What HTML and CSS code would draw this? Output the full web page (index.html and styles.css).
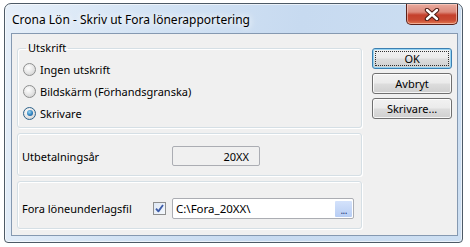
FILE: index.html
```html
<!DOCTYPE html>
<html lang="sv">
<head>
<meta charset="utf-8">
<title>Crona Lön - Skriv ut Fora lönerapportering</title>
<link rel="stylesheet" href="styles.css">
</head>
<body>
<div class="window">
  <div class="titlebar">
    <span class="title">Crona Lön - Skriv ut Fora lönerapportering</span>
    <div class="close" aria-label="Stäng">
      <svg width="16" height="13" viewBox="0 0 16 13">
        <path d="M3 2 L13 11 M13 2 L3 11" stroke="#4a1a12" stroke-width="4.4" stroke-linecap="round" fill="none"/>
        <path d="M3 2 L13 11 M13 2 L3 11" stroke="#ffffff" stroke-width="2.4" stroke-linecap="round" fill="none"/>
      </svg>
    </div>
  </div>
  <div class="client">
    <div class="groups">
      <fieldset class="group group-print">
        <legend class="legend">Utskrift</legend>
        <label class="radio-row"><span class="radio"></span><span>Ingen utskrift</span></label>
        <label class="radio-row"><span class="radio"></span><span>Bildskärm (Förhandsgranska)</span></label>
        <label class="radio-row"><span class="radio checked"><span class="dot"></span></span><span>Skrivare</span></label>
      </fieldset>
      <div class="group group-year">
        <span class="label label-year">Utbetalningsår</span>
        <span class="field field-year">20XX</span>
      </div>
      <div class="group group-file">
        <span class="label label-file">Fora löneunderlagsfil</span>
        <span class="checkbox">
          <svg width="9" height="9" viewBox="0 0 9 9"><path d="M1 4.6 L3.4 7.4 L8 1" stroke="#3d5ca8" stroke-width="1.8" fill="none" stroke-linejoin="round"/></svg>
        </span>
        <span class="field field-file"><span class="path">C:\Fora_20XX\</span><span class="browse">...</span></span>
      </div>
    </div>
    <div class="buttons">
      <button class="btn btn-default"><span class="focus">OK</span></button>
      <button class="btn">Avbryt</button>
      <button class="btn">Skrivare...</button>
    </div>
  </div>
</div>
</body>
</html>
```

FILE: styles.css
```css
html, body {
  margin: 0;
  padding: 0;
  background: #ffffff;
}

body {
  font-family: "Noto Sans", "Open Sans", sans-serif;
  font-size: 11px;
  color: #000;
}

.window {
  margin: 3px 0 0 4px;
  width: 457px;
  height: 238px;
  border: 1px solid #4d5a66;
  border-radius: 7px 7px 4px 4px;
  background: linear-gradient(100deg, #e6eff9 0%, #d3e3f4 30%, #c7daf0 60%, #cddff2 100%);
  display: flex;
  flex-direction: column;
  box-shadow: inset 0 0 0 1px rgba(255,255,255,0.6);
}

.titlebar {
  height: 29px;
  display: flex;
  align-items: flex-start;
  flex-shrink: 0;
}

.title {
  margin: 9px 0 0 7px;
  font-size: 12px;
  line-height: 14px;
  color: #000;
  text-shadow: 0 0 6px #fff, 0 0 10px #fff;
}

.close {
  margin-left: auto;
  margin-right: 4px;
  width: 50px;
  height: 20px;
  border: 1px solid #5c2119;
  border-top: none;
  border-radius: 0 0 5px 5px;
  background: linear-gradient(180deg, #e9aa9e 0%, #dc8a7c 40%, #c5402c 55%, #c84a33 80%, #e2784f 100%);
  box-shadow: inset 0 0 0 1px rgba(255,220,210,0.55);
  display: flex;
  align-items: center;
  justify-content: center;
}

.client {
  margin: 0 4px 6px 6px;
  flex: 1;
  border: 1px solid #8599b1;
  background: #f0f0f0;
  display: flex;
  padding: 0 5px;
  gap: 10px;
}

.groups {
  width: 346px;
  display: flex;
  flex-direction: column;
  gap: 5px;
  padding-top: 7px;
}

.group {
  border: 1px solid #d5dfe5;
  border-radius: 3px;
  box-shadow: inset 1px 1px 0 #fff, 1px 1px 0 #fff;
}

.group-print {
  margin: 0;
  padding: 3px 5px 3px 5px;
  display: flex;
  flex-direction: column;
}

.legend {
  margin-left: 3px;
  padding: 0 2px;
  line-height: 14px;
  font-size: 11px;
}

.radio-row {
  height: 22px;
  display: flex;
  align-items: center;
  gap: 4px;
  font-size: 11px;
}

.radio {
  width: 11px;
  height: 11px;
  border: 1px solid #8e8f8f;
  border-radius: 50%;
  background: radial-gradient(circle at 40% 35%, #ffffff 0%, #e6e6e6 50%, #c9c9c9 100%);
  display: flex;
  align-items: center;
  justify-content: center;
}

.radio.checked {
  border-color: #2c628b;
}

.dot {
  width: 6px;
  height: 6px;
  border-radius: 50%;
  background: radial-gradient(circle at 40% 35%, #9ad7f4 0%, #2f82bf 55%, #0e4b86 100%);
}

.group-year {
  padding: 12px 0 9px 4px;
  display: flex;
  align-items: center;
}

.group-file {
  padding: 16px 7px 9px 4px;
  display: flex;
  align-items: center;
}

.label {
  font-size: 11px;
  flex-shrink: 0;
}

.label-year {
  width: 150px;
}

.label-file {
  width: 131px;
}

.field {
  height: 18px;
  border: 1px solid #abadb3;
  border-radius: 2px;
  display: flex;
  align-items: center;
  font-size: 11px;
}

.field-year {
  width: 76px;
  justify-content: flex-end;
  padding-right: 10px;
  background: #f0f0f0;
}

.checkbox {
  width: 11px;
  height: 11px;
  border: 1px solid #8e8f8f;
  background: linear-gradient(135deg, #dfe8f5 0%, #f4f8fc 100%);
  display: flex;
  align-items: center;
  justify-content: center;
  margin-right: 6px;
  flex-shrink: 0;
}

.field-file {
  flex: 1;
  background: #fff;
  padding: 0 1px 0 3px;
  height: 19px;
  font-size: 11.5px;
}

.path {
  flex: 1;
}

.browse {
  width: 17px;
  height: 16px;
  background: linear-gradient(180deg, #d4e2fb 0%, #b7cdf4 100%);
  border-radius: 1px;
  color: #1d3a7a;
  font-size: 10px;
  line-height: 18px;
  text-align: center;
  letter-spacing: -0.5px;
}

.buttons {
  width: 80px;
  display: flex;
  flex-direction: column;
  gap: 4px;
  padding-top: 14px;
}

.btn {
  height: 21px;
  margin: 0;
  padding: 0;
  border: 1px solid #707070;
  border-radius: 3px;
  background: linear-gradient(180deg, #f2f2f2 0%, #ebebeb 48%, #dddddd 52%, #cfcfcf 100%);
  box-shadow: inset 0 0 0 1px rgba(255,255,255,0.8);
  font-family: "Noto Sans", "Open Sans", sans-serif;
  font-size: 11px;
  color: #000;
  display: flex;
  align-items: center;
  justify-content: center;
}

.btn-default {
  border-color: #3c7fb1;
  box-shadow: inset 0 0 0 1px #96d4f3;
  padding: 2px;
}

.focus {
  width: 100%;
  height: 100%;
  outline: 1px dotted #303030;
  outline-offset: -1px;
  display: flex;
  align-items: center;
  justify-content: center;
}
```
